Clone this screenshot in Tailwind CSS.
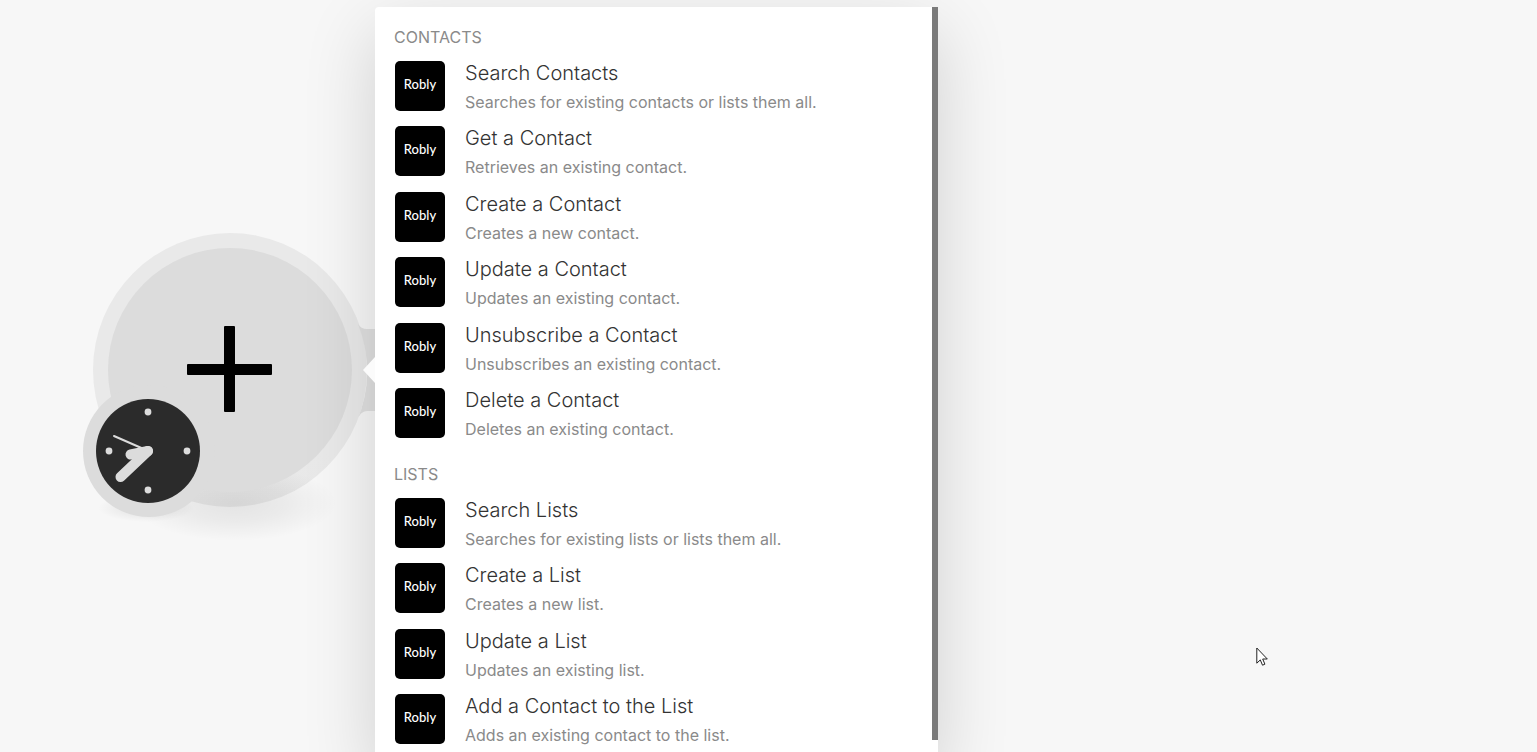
<!DOCTYPE html>
<html lang="en">
<head>
    <meta charset="UTF-8">
    <meta name="viewport" content="width=device-width, initial-scale=1.0">
    <title>Robly modules</title>
    <script src="https://cdn.jsdelivr.net/npm/@tailwindcss/browser@4"></script>
</head>
<body class="bg-[#f7f7f7] font-['Inter','Noto_Sans',sans-serif]">
    <main class="relative h-screen overflow-hidden">
        <!-- trigger node on the canvas -->
        <button type="button" aria-label="Add module" class="absolute left-[70px] top-[220px]">
            <svg class="block w-[330px] h-[340px]" viewBox="70 220 330 340">
                <defs>
                    <radialGradient id="floor">
                        <stop offset="0" stop-color="#000" stop-opacity="0.08"/>
                        <stop offset="0.5" stop-color="#000" stop-opacity="0.05"/>
                        <stop offset="1" stop-color="#000" stop-opacity="0"/>
                    </radialGradient>
                    <linearGradient id="ring" x1="0" y1="0" x2="0" y2="1">
                        <stop offset="0.8" stop-color="#e9e9e9"/>
                        <stop offset="1" stop-color="#e8e8e8"/>
                    </linearGradient>
                </defs>
                <ellipse cx="146" cy="508" rx="48" ry="14" fill="url(#floor)"/>
                <circle cx="230" cy="370" r="137" fill="url(#ring)"/>
                <path d="M358 324q3 5 9 5h30v82h-30q-7 0-10 10q20-48 1-97z" fill="#e0e0e0"/>
                <ellipse cx="235" cy="503" rx="102" ry="38" fill="url(#floor)"/>
                <circle cx="230" cy="370" r="122" fill="#dcdcdc"/>
                <circle cx="149" cy="451" r="66" fill="#dcdcdc"/>
                <rect x="187" y="364" width="85" height="11" rx="1"/>
                <rect x="224" y="326" width="11" height="86" rx="1"/>
                <circle cx="148" cy="451" r="52" fill="#2b2b2b"/>
                <g fill="#dcdcdc">
                    <circle cx="148" cy="412" r="3.4"/>
                    <circle cx="187" cy="451" r="3.4"/>
                    <circle cx="148" cy="490" r="3.4"/>
                    <circle cx="109" cy="451" r="3.4"/>
                </g>
                <g stroke="#dcdcdc" stroke-linecap="round" stroke-linejoin="round">
                    <path d="M148 451L120.500 477" stroke-width="10"/>
                    <path d="M148 451L130.500 454.500" stroke-width="10"/>
                    <path d="M146 450L114 436" stroke-width="2"/>
                </g>
            </svg>
        </button>

        <!-- module picker -->
        <section aria-label="Robly modules" class="absolute left-[375px] top-[7px] w-[563px] min-h-full bg-white rounded-tl px-5 pt-5 shadow-[0_24px_72px_rgba(0,0,0,0.16)]">
            <svg class="absolute right-full top-[350px] w-3 h-[26px]" viewBox="0 0 12 26"><path d="M12 0L0 13l12 13z" fill="#fbfbfb"/></svg>
            <div class="absolute right-0 top-0 w-[6px] h-[733px] bg-[#7a7a7a]"></div>

            <h2 class="-ml-px text-base leading-5 text-[#8a8a8a]">CONTACTS</h2>
            <ul id="contacts" class="mt-[14px]"></ul>
            <h2 class="-ml-px mt-[26px] text-base leading-5 text-[#8a8a8a]">LISTS</h2>
            <ul id="lists" class="mt-[14px]"></ul>
        </section>

        <svg class="absolute left-[1256px] top-[647px] w-3 h-5" viewBox="0 0 12 20">
            <path d="M0.800 1v15.200l3.500-3.300 2.200 5.300 2.400-1-2.200-5.200h4.600z" fill="#fff" stroke="#222" stroke-width="1"/>
        </svg>
    </main>

    <script>
        const modules = {
            contacts: [
                ['Search Contacts', 'Searches for existing contacts or lists them all.'],
                ['Get a Contact', 'Retrieves an existing contact.'],
                ['Create a Contact', 'Creates a new contact.'],
                ['Update a Contact', 'Updates an existing contact.'],
                ['Unsubscribe a Contact', 'Unsubscribes an existing contact.'],
                ['Delete a Contact', 'Deletes an existing contact.'],
            ],
            lists: [
                ['Search Lists', 'Searches for existing lists or lists them all.'],
                ['Create a List', 'Creates a new list.'],
                ['Update a List', 'Updates an existing list.'],
                ['Add a Contact to the List', 'Adds an existing contact to the list.'],
            ],
        };

        const renderGroup = (id) => {
            document.getElementById(id).innerHTML = modules[id].map(([title, text]) => `
                <li class="odd:mb-[15px] even:mb-4 last:mb-0">
                    <button type="button" class="flex w-full h-[50px] gap-5 text-left">
                        <span class="flex size-[50px] shrink-0 justify-center rounded-[5px] bg-black pt-[15px] font-['Lato',sans-serif] text-[13px] leading-4 font-medium text-white">Robly</span>
                        <span class="block whitespace-nowrap">
                            <span class="block text-xl leading-6 font-light text-[#333]">${title}</span>
                            <span class="block mt-[7px] text-base leading-5 text-[#8a8a8a]">${text}</span>
                        </span>
                    </button>
                </li>`).join('');
        };

        Object.keys(modules).forEach(renderGroup);
    </script>
</body>
</html>
